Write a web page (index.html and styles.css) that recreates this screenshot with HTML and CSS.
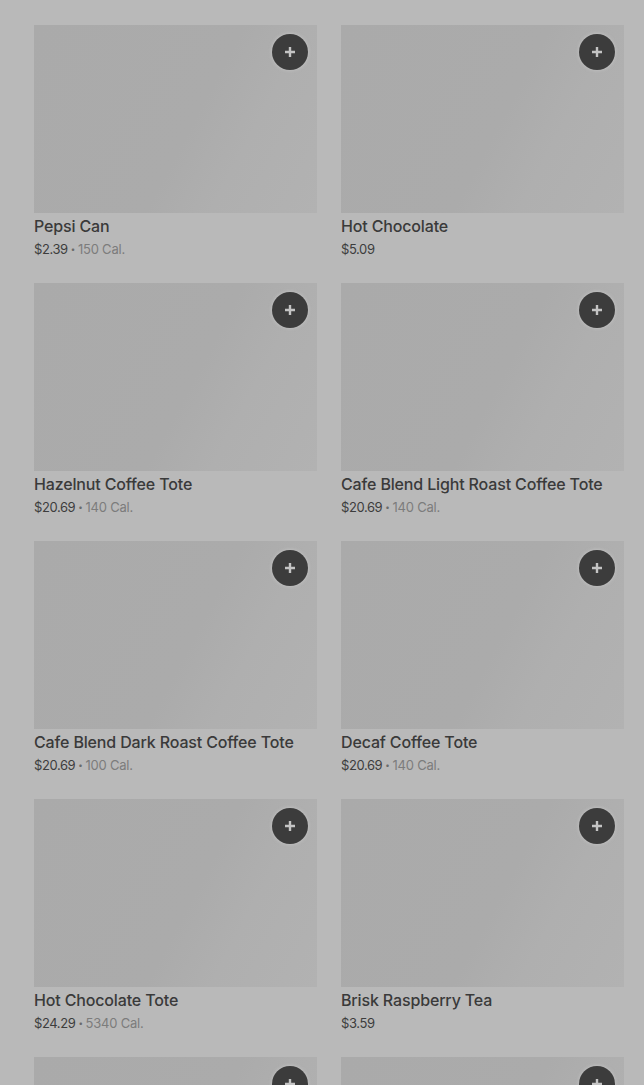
FILE: index.html
```html
<!DOCTYPE html>
<html>
<head>
<meta charset="utf-8">
<link rel="stylesheet" href="styles.css">
</head>
<body>
<div class="grid">
  <div class="card"><div class="img"><button class="add"><svg viewBox="0 0 16 16" width="16" height="16"><path d="M8 3v10M3 8h10" stroke="#c4c4c4" stroke-width="2.4"/></svg></button></div><div class="name">Pepsi Can</div><div class="meta"><span class="price">$2.39</span><span class="dot">•</span><span class="cal">150 Cal.</span></div></div>
  <div class="card"><div class="img"><button class="add"><svg viewBox="0 0 16 16" width="16" height="16"><path d="M8 3v10M3 8h10" stroke="#c4c4c4" stroke-width="2.4"/></svg></button></div><div class="name">Hot Chocolate</div><div class="meta"><span class="price">$5.09</span></div></div>
  <div class="card"><div class="img"><button class="add"><svg viewBox="0 0 16 16" width="16" height="16"><path d="M8 3v10M3 8h10" stroke="#c4c4c4" stroke-width="2.4"/></svg></button></div><div class="name">Hazelnut Coffee Tote</div><div class="meta"><span class="price">$20.69</span><span class="dot">•</span><span class="cal">140 Cal.</span></div></div>
  <div class="card"><div class="img"><button class="add"><svg viewBox="0 0 16 16" width="16" height="16"><path d="M8 3v10M3 8h10" stroke="#c4c4c4" stroke-width="2.4"/></svg></button></div><div class="name">Cafe Blend Light Roast Coffee Tote</div><div class="meta"><span class="price">$20.69</span><span class="dot">•</span><span class="cal">140 Cal.</span></div></div>
  <div class="card"><div class="img"><button class="add"><svg viewBox="0 0 16 16" width="16" height="16"><path d="M8 3v10M3 8h10" stroke="#c4c4c4" stroke-width="2.4"/></svg></button></div><div class="name">Cafe Blend Dark Roast Coffee Tote</div><div class="meta"><span class="price">$20.69</span><span class="dot">•</span><span class="cal">100 Cal.</span></div></div>
  <div class="card"><div class="img"><button class="add"><svg viewBox="0 0 16 16" width="16" height="16"><path d="M8 3v10M3 8h10" stroke="#c4c4c4" stroke-width="2.4"/></svg></button></div><div class="name">Decaf Coffee Tote</div><div class="meta"><span class="price">$20.69</span><span class="dot">•</span><span class="cal">140 Cal.</span></div></div>
  <div class="card"><div class="img"><button class="add"><svg viewBox="0 0 16 16" width="16" height="16"><path d="M8 3v10M3 8h10" stroke="#c4c4c4" stroke-width="2.4"/></svg></button></div><div class="name">Hot Chocolate Tote</div><div class="meta"><span class="price">$24.29</span><span class="dot">•</span><span class="cal">5340 Cal.</span></div></div>
  <div class="card"><div class="img"><button class="add"><svg viewBox="0 0 16 16" width="16" height="16"><path d="M8 3v10M3 8h10" stroke="#c4c4c4" stroke-width="2.4"/></svg></button></div><div class="name">Brisk Raspberry Tea</div><div class="meta"><span class="price">$3.59</span></div></div>
  <div class="card"><div class="img"><button class="add"><svg viewBox="0 0 16 16" width="16" height="16"><path d="M8 3v10M3 8h10" stroke="#c4c4c4" stroke-width="2.4"/></svg></button></div></div>
  <div class="card"><div class="img"><button class="add"><svg viewBox="0 0 16 16" width="16" height="16"><path d="M8 3v10M3 8h10" stroke="#c4c4c4" stroke-width="2.4"/></svg></button></div></div>
</div>
</body>
</html>
```
FILE: styles.css
```css
html, body {
  margin: 0;
  padding: 0;
  background: #b9b9b9;
  overflow: hidden;
  height: 1085px;
}
body {
  font-family: Inter, "Noto Sans", sans-serif;
}
.grid {
  display: grid;
  grid-template-columns: 283px 283px;
  column-gap: 24px;
  row-gap: 25px;
  padding: 25px 0 0 34px;
}
.card {
  display: flex;
  flex-direction: column;
  height: 233px;
}
.img {
  position: relative;
  height: 188px;
  background: linear-gradient(118deg, #aaaaaa 0%, #ababab 55%, #afafaf 72%, #b2b2b2 100%);
}
.add {
  position: absolute;
  top: 9px;
  right: 9px;
  width: 36px;
  height: 36px;
  border-radius: 50%;
  border: none;
  padding: 0;
  background: #3c3c3c;
  box-shadow: 0 0 3px 1px rgba(200,200,200,0.6);
  display: flex;
  align-items: center;
  justify-content: center;
}
.name {
  margin-top: 3px;
  font-size: 16px;
  line-height: 20px;
  font-weight: 500;
  color: #3a3a3a;
  letter-spacing: -0.15px;
}
.meta {
  margin-top: 4px;
  font-size: 13px;
  line-height: 18px;
  color: #7a7a7a;
  letter-spacing: -0.4px;
  display: flex;
  align-items: center;
}
.price {
  color: #3d3d3d;
}
.dot {
  font-size: 8px;
  margin: 0 3px;
  color: #6a6a6a;
}
.cal {
  color: #7c7c7c;
  letter-spacing: -0.2px;
}
```
